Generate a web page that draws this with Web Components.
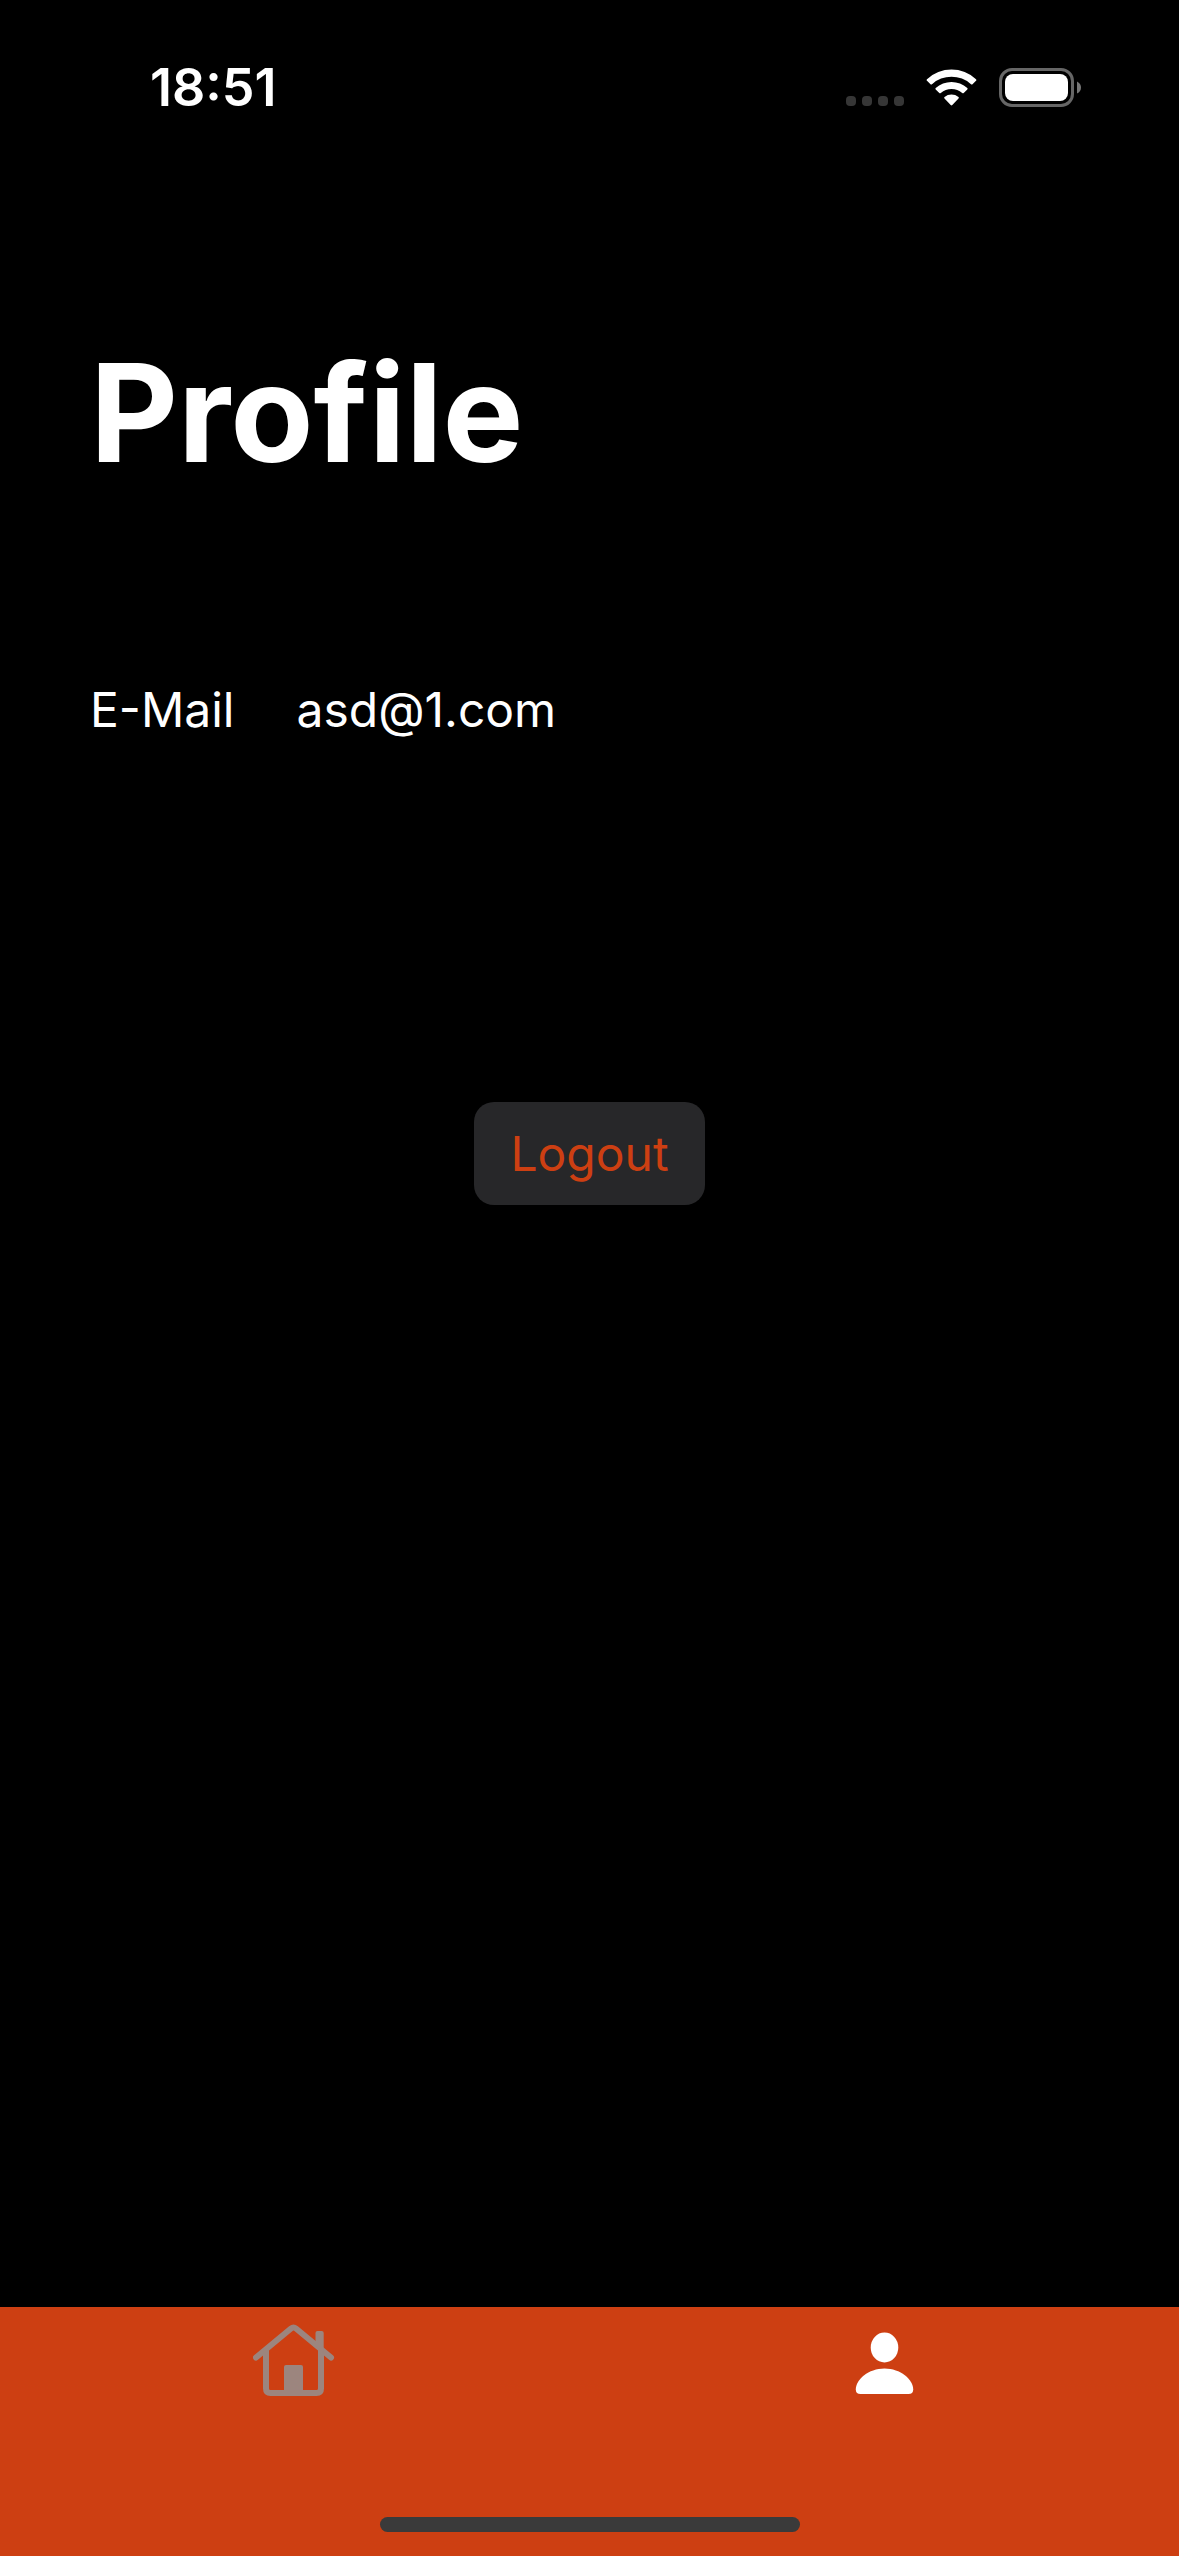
<!DOCTYPE html>
<html lang="en">
<head>
<meta charset="utf-8">
<meta name="viewport" content="width=device-width, initial-scale=1">
<title>Profile</title>
<style>
html,body{margin:0;height:100%;background:#000}
</style>
</head>
<body>
<profile-app></profile-app>
<script>
class BaseElement extends HTMLElement {
  constructor() {
    super();
    this.attachShadow({mode: 'open'}).innerHTML = this.constructor.markup;
  }
}

class StatusBar extends BaseElement {
  static markup = `
<style>
:host{display:flex;justify-content:space-between;align-items:center;height:176px;padding:0 98px 0 150px;box-sizing:border-box}
time{font-size:52px;font-weight:600;line-height:60px}
.icons{display:flex;align-items:center;gap:22px}
svg{display:block}
</style>
<time>18:51</time>
<div class="icons">
  <svg width="58" height="40" viewBox="0 0 58 40" fill="#363636" role="img" aria-label="No signal">
    <rect y="28" width="10" height="10" rx="4"/><rect x="16" y="28" width="10" height="10" rx="4"/><rect x="32" y="28" width="10" height="10" rx="4"/><rect x="48" y="28" width="10" height="10" rx="4"/>
  </svg>
  <svg width="51" height="40" viewBox="0 0 51 40" fill="#fff" role="img" aria-label="Wi-Fi">
    <path d="M1 11.2 Q.2 12 1 12.800 L4.500 16.200 Q5.200 16.900 6 16.200 A29 29 0 0 1 45 16.200 Q45.800 16.900 46.500 16.200 L50 12.800 Q50.800 12 50 11.200 A36 36 0 0 0 1 11.200Z"/>
    <path d="M9.700 20 Q9 20.800 9.700 21.500 L13.300 25 Q14 25.700 14.800 25 A16.500 16.500 0 0 1 36.200 25 Q37 25.700 37.700 25 L41.300 21.500 Q42 20.800 41.300 20 A23.500 23.500 0 0 0 9.700 20Z"/>
    <path d="M18.500 28.900 Q17.700 29.700 18.500 30.500 L24.700 37 Q25.500 37.800 26.300 37 L32.500 30.500 Q33.300 29.700 32.500 28.900 A11.500 11.500 0 0 0 18.500 28.900Z"/>
  </svg>
  <svg width="82" height="40" viewBox="0 0 82 40" role="img" aria-label="Battery full">
    <rect x="1.500" y="1.500" width="72" height="36" rx="11.500" fill="none" stroke="#666" stroke-width="3"/>
    <rect x="6" y="6" width="63" height="27" rx="8" fill="#fff"/>
    <path d="M78 13.500 Q82 15.500 82 19.500 T78 25.500Z" fill="#777"/>
  </svg>
</div>`;
}

class ProfileField extends BaseElement {
  static markup = `
<style>
:host{display:block}
dl{display:flex;gap:62px;margin:0;font-size:48px;line-height:60px}
dd{margin:0}
</style>
<dl><dt><slot name="label"></slot></dt><dd><slot></slot></dd></dl>`;
}

class ActionButton extends BaseElement {
  static markup = `
<style>
:host{display:block}
button{display:block;margin:0;border:0;border-radius:20px;padding:22px 36px 21px;background:#272729;color:#cd3f12;font:inherit;font-size:48px;line-height:60px;cursor:pointer}
</style>
<button type="button"><slot></slot></button>`;
}

class TabItem extends BaseElement {
  static markup = `
<style>
:host{display:flex;flex:1;color:#9c857e}
:host([active]){color:#fff}
a{display:flex;flex:1;justify-content:center;align-items:flex-start;padding-top:17px;color:inherit}
</style>
<a href="#"><slot></slot></a>`;
  connectedCallback() {
    this.shadowRoot.querySelector('a').setAttribute('aria-label', this.getAttribute('label'));
  }
}

class TabBar extends BaseElement {
  static markup = `
<style>
:host{display:flex;flex-direction:column;height:249px;box-sizing:border-box;padding-bottom:24px;background:#cd3f12}
nav{display:flex;flex:1}
.indicator{align-self:center;width:420px;height:15px;border-radius:8px;background:#3a3a3a}
</style>
<nav aria-label="Main"><slot></slot></nav>
<div class="indicator"></div>`;
}

class ProfileApp extends BaseElement {
  static markup = `
<style>
:host{display:flex;flex-direction:column;min-height:100vh;background:#000;color:#fff;font-family:Inter,"Liberation Sans",sans-serif}
main{flex:1;display:flex;flex-direction:column;padding:152px 90px 0}
h1{margin:0 0 182px;font-size:136px;font-weight:700;line-height:170px}
action-button{align-self:center;margin-top:362px}
</style>
<status-bar></status-bar>
<main>
  <h1>Profile</h1>
  <profile-field><span slot="label">E-Mail</span>asd@1.com</profile-field>
  <action-button>Logout</action-button>
</main>
<tab-bar>
  <tab-item label="Home">
    <svg width="84" height="74" viewBox="0 0 84 74" fill="none" stroke="currentColor" stroke-width="6" stroke-linecap="round" stroke-linejoin="round">
      <path d="M3 33.500 L38 4.500 Q40.500 2.500 43 4.500 L78 33.500"/>
      <path d="M13 27 V64.500 Q13 69 17.500 69 H63.500 Q68 69 68 64.500 V27"/>
      <path d="M62.500 22 V9 Q62.500 7 64.500 7 H68.700 Q70.700 7 70.700 9 V29Z" fill="currentColor" stroke="none"/>
      <path d="M31 69 V43 Q31 41 33 41 H48 Q50 41 50 43 V69Z" fill="currentColor" stroke="none"/>
    </svg>
  </tab-item>
  <tab-item label="Profile" active>
    <svg width="84" height="74" viewBox="0 0 84 74" fill="currentColor">
      <ellipse cx="42.500" cy="23.500" rx="13.800" ry="15"/>
      <path d="M42.500 44.500 C58.500 44.500 71.200 55.500 71.200 65.500 Q71.200 70 66.500 70 H18.500 Q13.800 70 13.800 65.500 C13.800 55.500 26.500 44.500 42.500 44.500Z"/>
    </svg>
  </tab-item>
</tab-bar>`;
}

customElements.define('status-bar', StatusBar);
customElements.define('profile-field', ProfileField);
customElements.define('action-button', ActionButton);
customElements.define('tab-item', TabItem);
customElements.define('tab-bar', TabBar);
customElements.define('profile-app', ProfileApp);
</script>
</body>
</html>
